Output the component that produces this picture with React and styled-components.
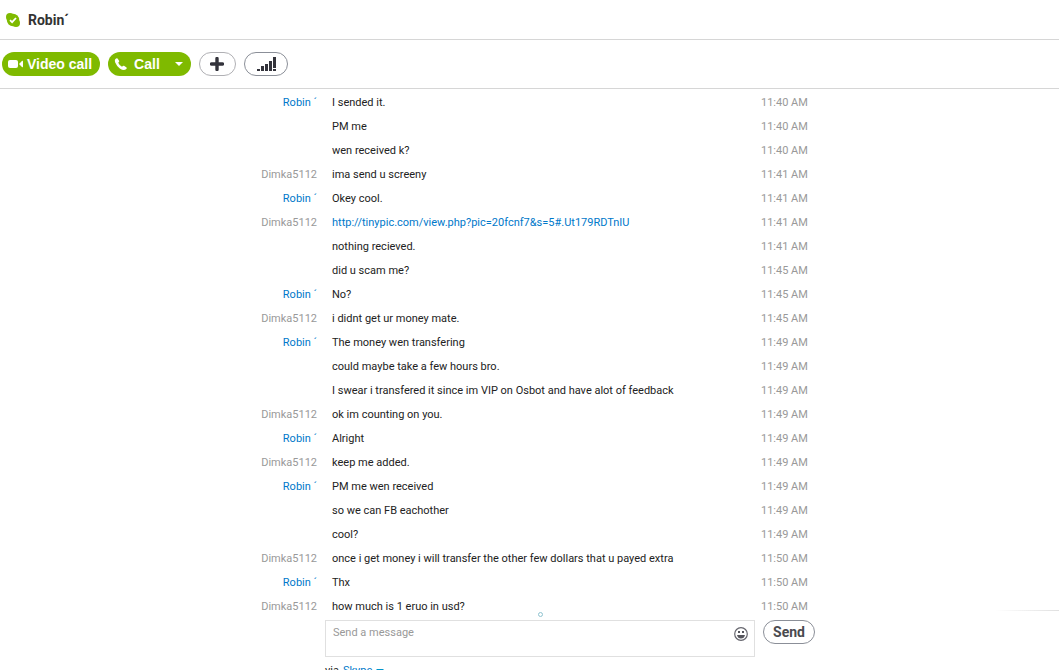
import React from "react";
import styled, { createGlobalStyle } from "styled-components";

const GlobalStyle = createGlobalStyle`
  * { box-sizing: border-box; }
  body {
    margin: 0;
    background: #fff;
    color: #222;
    font: 11px/14px Roboto, sans-serif;
  }
`;

const Shell = styled.div`
  display: flex;
  flex-direction: column;
  height: 100vh;
  overflow: hidden;
`;

const Header = styled.header`
  display: flex;
  flex: none;
  align-items: center;
  gap: 8px;
  height: 40px;
  padding-left: 6px;
  border-bottom: 1px solid #d6d6d6;
`;

const Title = styled.h1`
  margin: 0;
  color: #333;
  font: bold 14px/16px Roboto, sans-serif;
`;

const Toolbar = styled.div`
  display: flex;
  flex: none;
  align-items: center;
  gap: 8px;
  height: 49px;
  padding-left: 2px;
  border-bottom: 1px solid #d6d6d6;
`;

const GreenButton = styled.button`
  display: flex;
  align-items: center;
  gap: ${(p) => p.$gap};
  height: 24px;
  padding: 0 8px 0 6px;
  border: 0;
  border-radius: 12px;
  background: #7fba00;
  color: #fff;
  font: bold 14px/24px "Liberation Sans", sans-serif;
`;

const OutlineButton = styled.button`
  display: flex;
  flex: none;
  align-items: center;
  justify-content: center;
  width: ${(p) => p.$width};
  height: 24px;
  padding: 0;
  border: 1px solid ${(p) => p.$line || "#8b8f98"};
  border-radius: 12px;
  background: #fff;
  color: #4a4a4f;
  font: bold 14px/22px Roboto, sans-serif;
`;

const Caret = styled.span`
  margin-left: ${(p) => p.$space || "0"};
  border: 4px solid transparent;
  border-top-color: ${(p) => p.$color || "#fff"};
  border-bottom: 0;
`;

const Conversation = styled.main`
  display: grid;
  flex: none;
  grid-template-columns: 1fr 430px 1fr;
  padding: 2px 0 1px 21px;
`;

const Row = styled.div`
  display: grid;
  grid-column: 1 / -1;
  grid-template-columns: subgrid;
  line-height: 24px;
`;

const Sender = styled.span`
  padding-right: 8px;
  text-align: right;
  color: ${(p) => (p.$own ? "#999" : "#0078ca")};
`;

const Message = styled.span`
  padding-left: 7px;
  white-space: nowrap;
`;

const Time = styled.time`
  padding-left: 6px;
  color: #999;
`;

const Link = styled.a`
  color: #0078ca;
  text-decoration: none;
`;

const Composer = styled.form`
  position: relative;
  display: grid;
  flex: none;
  grid-template-columns: 1fr 430px 1fr;
  padding-left: 21px;
`;

const InputBox = styled.div`
  display: flex;
  grid-column: 2;
  align-items: flex-start;
  height: 37px;
  padding: 5px 6px 0 7px;
  border: 1px solid #e0e0e0;
`;

const Input = styled.textarea`
  flex: 1;
  height: 28px;
  padding: 0;
  border: 0;
  outline: 0;
  resize: none;
  background: transparent;
  color: #222;
  font: inherit;
  &::placeholder { color: #999; opacity: 1; }
`;

const IconButton = styled.button`
  display: flex;
  padding: 1px 0 0;
  border: 0;
  background: none;
`;

const SendCell = styled.div`
  padding-left: 8px;
`;

const Via = styled.div`
  grid-column: 2;
  display: flex;
  align-items: center;
  gap: 4px;
  padding-top: 7px;
`;

const Handle = styled.span`
  position: absolute;
  top: -8px;
  left: calc(50% + 8px);
  width: 5px;
  height: 5px;
  border: 1px solid #8fc3d0;
  border-radius: 50%;
`;

const FadeLine = styled.span`
  position: absolute;
  top: -10px;
  right: 0;
  width: 64px;
  height: 1px;
  background: linear-gradient(to right, #fff, #e0e0e0);
`;

const R = "Robin ´";
const D = "Dimka5112";
const log = [
  [R, "I sended it.", "11:40 AM"],
  ["", "PM me", "11:40 AM"],
  ["", "wen received k?", "11:40 AM"],
  [D, "ima send u screeny", "11:41 AM"],
  [R, "Okey cool.", "11:41 AM"],
  [D, "http://tinypic.com/view.php?pic=20fcnf7&s=5#.Ut179RDTnIU", "11:41 AM"],
  ["", "nothing recieved.", "11:41 AM"],
  ["", "did u scam me?", "11:45 AM"],
  [R, "No?", "11:45 AM"],
  [D, "i didnt get ur money mate.", "11:45 AM"],
  [R, "The money wen transfering", "11:49 AM"],
  ["", "could maybe take a few hours bro.", "11:49 AM"],
  ["", "I swear i transfered it since im VIP on Osbot and have alot of feedback", "11:49 AM"],
  [D, "ok im counting on you.", "11:49 AM"],
  [R, "Alright", "11:49 AM"],
  [D, "keep me added.", "11:49 AM"],
  [R, "PM me wen received", "11:49 AM"],
  ["", "so we can FB eachother", "11:49 AM"],
  ["", "cool?", "11:49 AM"],
  [D, "once i get money i will transfer the other few dollars that u payed extra", "11:50 AM"],
  [R, "Thx", "11:50 AM"],
  [D, "how much is 1 eruo in usd?", "11:50 AM"],
];

const StatusIcon = () => (
  <svg width="14" height="14" viewBox="0 0 14 14" aria-hidden="true">
    <circle cx="4" cy="4" r="4" fill="#7fba00" />
    <circle cx="10" cy="10" r="4" fill="#7fba00" />
    <circle cx="7" cy="7" r="6.2" fill="#7fba00" />
    <path d="M4 7.2l2.1 2L10 5" fill="none" stroke="#fff" strokeWidth="1.8" />
  </svg>
);

const VideoIcon = () => (
  <svg width="16" height="10" viewBox="0 0 16 10" fill="#fff" aria-hidden="true">
    <rect x="0" y="1" width="10" height="8" rx="2" />
    <path d="M11 5l3.2-3.2Q15 1.4 15 2.4v5.2q0 1-.8.6z" />
  </svg>
);

const PhoneIcon = () => (
  <svg width="14" height="14" viewBox="0 0 14 14" fill="#fff" aria-hidden="true">
    <path d="M1.2 2.2Q2.6.6 3.6 1.4L5.2 4Q5.5 4.8 4.2 5.8 5.2 8.2 8 9.8 9.2 8.4 10 8.8L12.6 10.4Q13.4 11.4 11.6 12.6 9.4 13.8 5.8 11.4 2.4 8.8 1.2 5.6.4 3.4 1.2 2.2z" />
  </svg>
);

const PlusIcon = () => (
  <svg width="14" height="14" viewBox="0 0 14 14" aria-hidden="true">
    <path d="M7 1.500v11M1.500 7h11" stroke="#33333b" strokeWidth="3.4" strokeLinecap="round" />
  </svg>
);

const SignalIcon = () => (
  <svg width="20" height="14" viewBox="0 0 20 14" fill="#33333b" aria-hidden="true">
    <path d="M1 12h3v2H1zM5 9h3v5H5zM9 7h3v7H9zM13 4h3v10h-3zM17 0h3v11h-3zM17 12h3v2h-3z" />
  </svg>
);

const SmileIcon = () => (
  <svg width="14" height="14" viewBox="0 0 14 14" aria-hidden="true">
    <circle cx="7" cy="7" r="6.3" fill="none" stroke="#66666e" strokeWidth="1.2" />
    <path d="M4 4h2v2H4zM8 4h2v2H8zM3 8h8q-.8 3.500-4 3.500T3 8z" fill="#55555c" />
  </svg>
);

export default function App() {
  return (
    <Shell>
      <GlobalStyle />
      <Header>
        <StatusIcon />
        <Title>Robin´</Title>
      </Header>
      <Toolbar>
        <GreenButton type="button" $gap="3px"><VideoIcon />Video call</GreenButton>
        <GreenButton type="button" $gap="6px"><PhoneIcon />Call<Caret $space="9px" /></GreenButton>
        <OutlineButton type="button" $width="37px" $line="#b0b0b4" aria-label="Add"><PlusIcon /></OutlineButton>
        <OutlineButton type="button" $width="44px" aria-label="Call quality"><SignalIcon /></OutlineButton>
      </Toolbar>
      <Conversation>
        {log.map(([name, text, time], i) => (
          <Row key={i}>
            <Sender $own={name === D}>{name}</Sender>
            <Message>{text.startsWith("http") ? <Link href={text}>{text}</Link> : text}</Message>
            <Time>{time}</Time>
          </Row>
        ))}
      </Conversation>
      <Composer onSubmit={(e) => e.preventDefault()}>
        <FadeLine />
        <Handle />
        <InputBox>
          <Input aria-label="Message" placeholder="Send a message" />
          <IconButton type="button" aria-label="Emoticons"><SmileIcon /></IconButton>
        </InputBox>
        <SendCell>
          <OutlineButton type="submit" $width="52px">Send</OutlineButton>
        </SendCell>
        <Via>via <Link href="#skype">Skype</Link><Caret $color="#0095cc" /></Via>
      </Composer>
    </Shell>
  );
}
